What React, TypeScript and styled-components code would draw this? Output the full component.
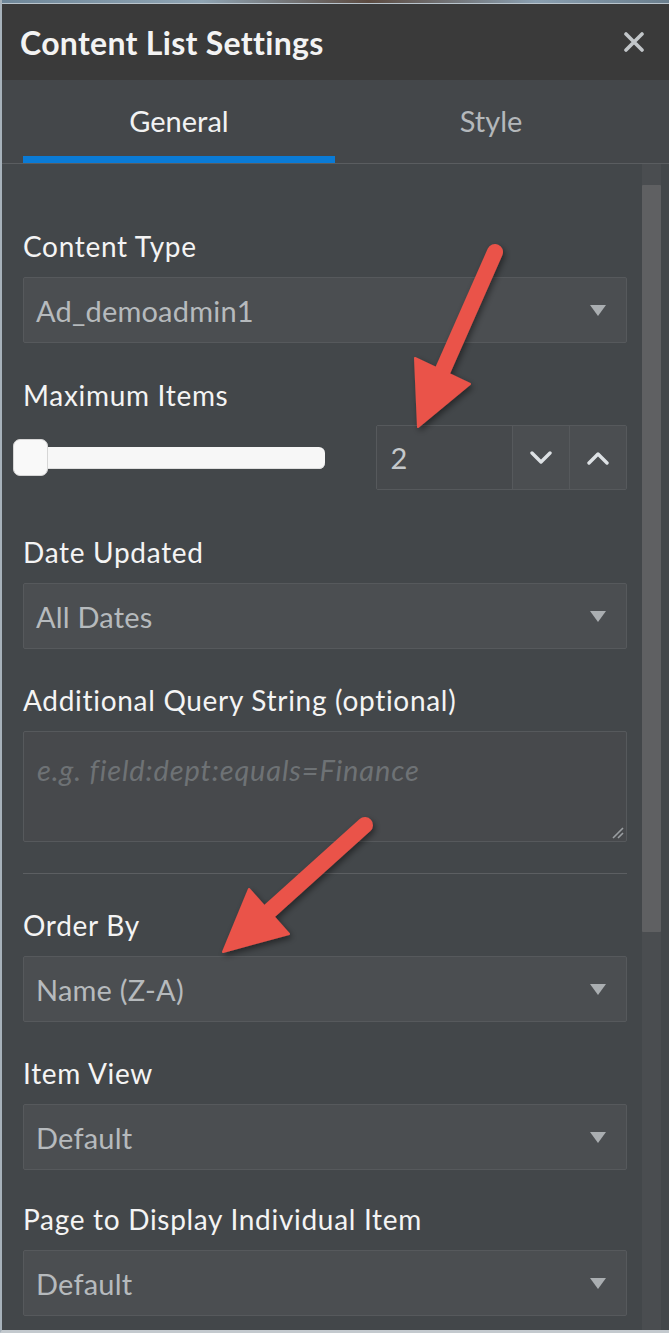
import React from "react";
import styled, { createGlobalStyle } from "styled-components";

const Global = createGlobalStyle`
  html, body { margin: 0; padding: 0; background: #43474a; }
  body { font-family: Lato, "Noto Sans", sans-serif; }
  * { box-sizing: border-box; }
`;

const Page = styled.div`
  position: relative;
  width: 669px;
  height: 1333px;
  overflow: hidden;
  background: #43474a;
  border-left: 2px solid #a7b2bb;
  border-bottom: 3px solid #c3c9ce;
  display: flex;
  flex-direction: column;
`;

const TopStrip = styled.div`
  height: 4px;
  flex: none;
  background: linear-gradient(90deg, #6f8799 0%, #8fa4b3 30%, #5b4a40 55%, #8a9fb0 80%, #6a7e8d 100%);
  border-bottom: 1px solid #b9c4cc;
`;

const Header = styled.div`
  height: 76px;
  flex: none;
  background: #3a3a3a;
  display: flex;
  align-items: center;
  justify-content: space-between;
  padding: 0 24px 0 18px;
`;

const Title = styled.h1`
  margin: 0;
  font-size: 32px;
  font-weight: 700;
  color: #f3f3f3;
  letter-spacing: 0.3px;
`;

const CloseButton = styled.button`
  border: 0;
  background: transparent;
  padding: 0;
  width: 22px;
  height: 22px;
  display: flex;
  align-items: center;
  justify-content: center;
  cursor: pointer;
`;

const Tabs = styled.div`
  height: 84px;
  flex: none;
  display: flex;
  padding-left: 21px;
  border-bottom: 1px solid #5a5d60;
  background: #44474a;
`;

const Tab = styled.div<{ $active?: boolean }>`
  width: 312px;
  display: flex;
  align-items: center;
  justify-content: center;
  font-size: 29px;
  color: ${(p) => (p.$active ? "#f2f2f2" : "#b4b8bb")};
  border-bottom: 7px solid ${(p) => (p.$active ? "#0a7bd6" : "transparent")};
  padding-top: 5px;
`;

const Body = styled.div`
  flex: 1;
  display: flex;
  min-height: 0;
`;

const Content = styled.div`
  width: 625px;
  padding: 67px 0 0 21px;
  display: flex;
  flex-direction: column;
`;

const ScrollTrack = styled.div`
  width: 19px;
  margin-left: 15px;
  background: #4a4d50;
  padding-top: 21px;
`;

const ScrollThumb = styled.div`
  height: 747px;
  background: #5f6062;
  border-radius: 1px;
`;

const Group = styled.div<{ $gap?: number }>`
  display: flex;
  flex-direction: column;
  margin-bottom: ${(p) => p.$gap ?? 36}px;
`;

const Label = styled.label<{ $below?: number }>`
  height: 30px;
  line-height: 30px;
  font-size: 28px;
  letter-spacing: 0.7px;
  color: #f4f4f4;
  margin-bottom: ${(p) => p.$below ?? 16}px;
`;

const SelectBox = styled.div`
  height: 66px;
  border: 1px solid #56595c;
  border-radius: 2px;
  background: #4b4e51;
  display: flex;
  align-items: center;
  justify-content: space-between;
  padding: 0 20px 0 12px;
  font-size: 29px;
  letter-spacing: 0.2px;
  color: #b6babd;
`;

const Caret = styled.span`
  width: 0;
  height: 0;
  border-left: 8px solid transparent;
  border-right: 8px solid transparent;
  border-top: 11px solid #aaaeb1;
`;

const SliderRow = styled.div`
  display: flex;
  align-items: center;
  height: 65px;
  margin-bottom: 47px;
`;

const Slider = styled.div`
  position: relative;
  margin-left: -10px;
  width: 313px;
  height: 37px;
  display: flex;
  align-items: center;
`;

const SliderTrack = styled.div`
  flex: 1;
  height: 22px;
  background: #f7f7f7;
  border-radius: 6px;
  box-shadow: inset 0 -1px 0 #dedede;
`;

const SliderHandle = styled.div`
  position: absolute;
  left: 0;
  top: 0;
  width: 35px;
  height: 37px;
  background: #f9f9f9;
  border: 1px solid #d6d6d6;
  border-radius: 7px;
`;

const Spinner = styled.div`
  margin-left: 51px;
  width: 251px;
  height: 65px;
  display: flex;
  border: 1px solid #56595c;
  border-radius: 2px;
`;

const SpinValue = styled.div`
  flex: 1;
  background: #46494c;
  display: flex;
  align-items: center;
  padding-left: 13px;
  font-size: 29px;
  color: #c4c8cb;
`;

const SpinButton = styled.div`
  width: 57px;
  background: #4b4e51;
  border-left: 1px solid #56595c;
  display: flex;
  align-items: center;
  justify-content: center;
`;

const TextArea = styled.div`
  position: relative;
  height: 111px;
  border: 1px solid #56595c;
  border-radius: 2px;
  background: #47494c;
  padding: 20px 0 0 13px;
  font-size: 29px;
  letter-spacing: 0.85px;
  font-style: italic;
  color: #6e7275;
`;

const Grip = styled.svg`
  position: absolute;
  right: 2px;
  bottom: 2px;
`;

const Divider = styled.div`
  height: 1px;
  flex: none;
  margin-bottom: 36px;
  background: #5c5f62;
`;

const Overlay = styled.svg`
  position: absolute;
  left: 0;
  top: 0;
  pointer-events: none;
`;

const Chevron = ({ up }: { up?: boolean }) => (
  <svg width="24" height="14" viewBox="0 0 24 14">
    <polyline
      points={up ? "3,12 12,3 21,12" : "3,2 12,11 21,2"}
      fill="none"
      stroke="#dde1e4"
      strokeWidth="3.4"
      strokeLinecap="round"
      strokeLinejoin="round"
    />
  </svg>
);

const Select = ({ value }: { value: string }) => (
  <SelectBox>
    <span>{value}</span>
    <Caret />
  </SelectBox>
);

const Arrow = ({ tail, tip, w1, w2 }: { tail: [number, number]; tip: [number, number]; w1: [number, number]; w2: [number, number] }) => {
  const bx = (w1[0] + w2[0]) / 2;
  const by = (w1[1] + w2[1]) / 2;
  return (
    <g filter="url(#shadow)">
      <line x1={tail[0]} y1={tail[1]} x2={bx} y2={by} stroke="#ea5349" strokeWidth="16" strokeLinecap="round" />
      <polygon points={`${tip[0]},${tip[1]} ${w1[0]},${w1[1]} ${w2[0]},${w2[1]}`} fill="#ea5349" stroke="#ea5349" strokeWidth="2" strokeLinejoin="round" />
    </g>
  );
};

export default function App() {
  return (
    <>
      <Global />
      <Page>
        <TopStrip />
        <Header>
          <Title>Content List Settings</Title>
          <CloseButton aria-label="Close">
            <svg width="20" height="20" viewBox="0 0 20 20">
              <path d="M2 2 L18 18 M18 2 L2 18" stroke="#c2c6c9" strokeWidth="3.6" strokeLinecap="round" />
            </svg>
          </CloseButton>
        </Header>
        <Tabs>
          <Tab $active>General</Tab>
          <Tab>Style</Tab>
        </Tabs>
        <Body>
          <Content>
            <Group $gap={37}>
              <Label>Content Type</Label>
              <Select value="Ad_demoadmin1" />
            </Group>
            <Label $below={15}>Maximum Items</Label>
            <SliderRow>
              <Slider>
                <SliderTrack />
                <SliderHandle />
              </Slider>
              <Spinner>
                <SpinValue>2</SpinValue>
                <SpinButton><Chevron /></SpinButton>
                <SpinButton><Chevron up /></SpinButton>
              </Spinner>
            </SliderRow>
            <Group>
              <Label>Date Updated</Label>
              <Select value="All Dates" />
            </Group>
            <Group $gap={31}>
              <Label>Additional Query String (optional)</Label>
              <TextArea>
                e.g. field:dept:equals=Finance
                <Grip width="14" height="14" viewBox="0 0 14 14">
                  <path d="M13 3 L3 13 M13 8 L8 13" stroke="#9a9ea1" strokeWidth="1.6" />
                </Grip>
              </TextArea>
            </Group>
            <Divider />
            <Group>
              <Label>Order By</Label>
              <Select value="Name (Z-A)" />
            </Group>
            <Group $gap={34}>
              <Label>Item View</Label>
              <Select value="Default" />
            </Group>
            <Group>
              <Label>Page to Display Individual Item</Label>
              <Select value="Default" />
            </Group>
          </Content>
          <ScrollTrack>
            <ScrollThumb />
          </ScrollTrack>
        </Body>
        <Overlay width="669" height="1333" viewBox="0 0 669 1333">
          <defs>
            <filter id="shadow" x="-20%" y="-20%" width="140%" height="140%">
              <feDropShadow dx="2" dy="3" stdDeviation="3" floodColor="#000" floodOpacity="0.45" />
            </filter>
          </defs>
          <Arrow tail={[493, 252]} tip={[416, 427]} w1={[413, 358]} w2={[468, 384]} />
          <Arrow tail={[363, 825]} tip={[221, 952]} w1={[247, 889]} w2={[287, 934]} />
        </Overlay>
      </Page>
    </>
  );
}
